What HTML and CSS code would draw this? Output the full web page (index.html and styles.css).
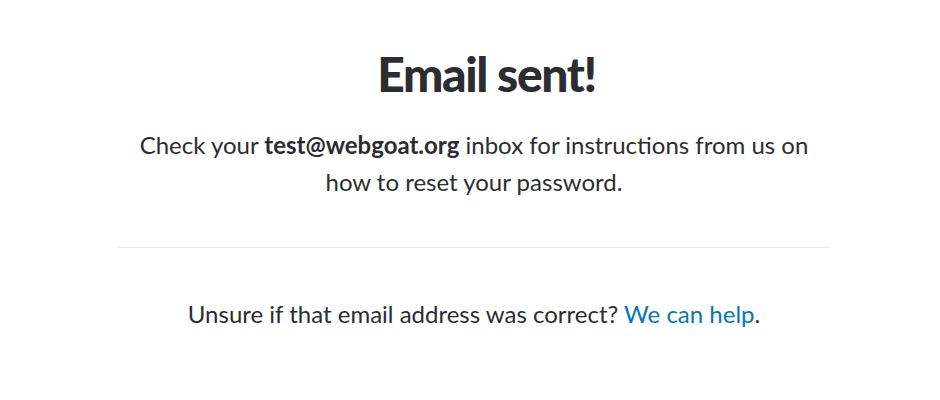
FILE: index.html
```html
<!DOCTYPE html>
<html>
<head>
<meta charset="utf-8">
<link rel="stylesheet" href="styles.css">
</head>
<body>
<main class="card">
  <h1 class="title">Email sent!</h1>
  <p class="lead">Check your <strong>test@webgoat.org</strong> inbox for instructions from us on how to reset your password.</p>
  <hr class="divider">
  <p class="help">Unsure if that email address was correct? <a href="#" class="link">We can help</a>.</p>
</main>
</body>
</html>
```

FILE: styles.css
```css
html, body {
  margin: 0;
  padding: 0;
  background: #fff;
}
body {
  font-family: Lato, "Open Sans", sans-serif;
  color: #2c2d30;
}
.card {
  width: 712px;
  margin: 0 0 0 118px;
  padding-top: 44px;
  text-align: center;
}
.title {
  font-size: 48px;
  font-weight: 900;
  letter-spacing: -1.4px;
  line-height: 60px;
  margin: 0 0 22px;
  padding-left: 25px;
}
.lead {
  font-size: 24px;
  line-height: 37px;
  margin: 0 auto;
  width: 690px;
}
.lead strong {
  font-weight: 700;
}
.divider {
  border: 0;
  border-top: 1px solid #e8e8e8;
  margin: 47px 0 0;
}
.help {
  font-size: 24px;
  line-height: 37px;
  margin: 47px 0 0;
}
.link {
  color: #0576b9;
  text-decoration: none;
}
```
